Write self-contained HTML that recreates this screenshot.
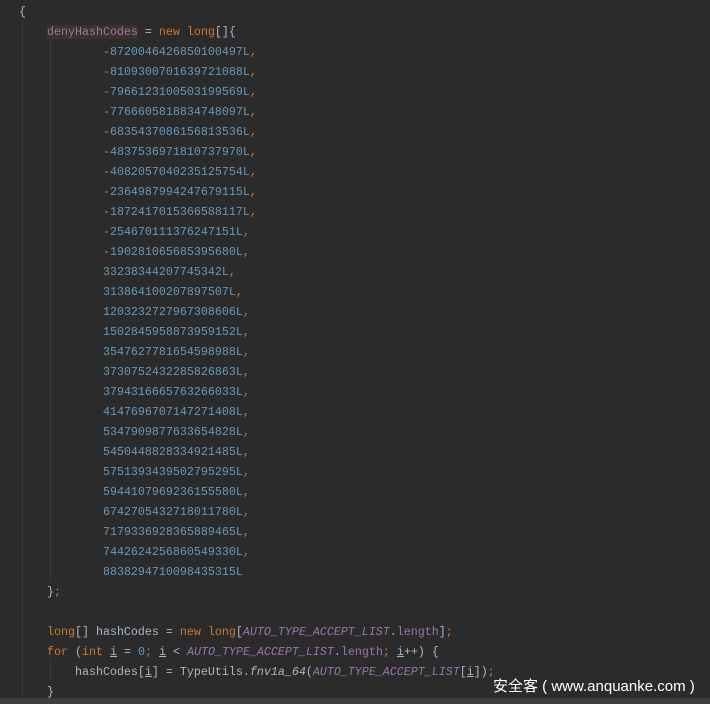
<!DOCTYPE html><html><head><style>
body{margin:0;background:#2b2b2b;width:710px;height:704px;overflow:hidden;position:relative}
pre{margin:0;position:absolute;left:19px;top:2px;font-family:"Liberation Mono",monospace;font-size:11.67px;line-height:20px;color:#a9b7c6;padding-top:0}
.n{color:#6897bb}.k{color:#cc7832}.f{color:#9876aa;font-style:italic}.v{color:#9876aa}
.u{text-decoration:underline}
.hl{background:#3b322e}
.g{position:absolute;width:1px;background:#3a3a3a}
.wm{position:absolute;left:493px;top:675px;color:#fff;font-family:"Liberation Sans","Noto Sans CJK SC",sans-serif;font-size:15px}
.bot{position:absolute;left:0;top:698px;width:710px;height:6px;background:#3c3f41}
</style></head><body>
<div class="g" style="left:22px;top:20px;height:678px"></div>
<div class="g" style="left:50px;top:40px;height:540px"></div>
<div class="g" style="left:50px;top:660px;height:20px"></div>
<pre>{
    <span class="v hl">denyHashCodes</span> = <span class="k">new long</span>[]{
            <span class="n">-8720046426850100497L</span><span class="k">,</span>
            <span class="n">-8109300701639721088L</span><span class="k">,</span>
            <span class="n">-7966123100503199569L</span><span class="k">,</span>
            <span class="n">-7766605818834748097L</span><span class="k">,</span>
            <span class="n">-6835437086156813536L</span><span class="k">,</span>
            <span class="n">-4837536971810737970L</span><span class="k">,</span>
            <span class="n">-4082057040235125754L</span><span class="k">,</span>
            <span class="n">-2364987994247679115L</span><span class="k">,</span>
            <span class="n">-1872417015366588117L</span><span class="k">,</span>
            <span class="n">-254670111376247151L</span><span class="k">,</span>
            <span class="n">-190281065685395680L</span><span class="k">,</span>
            <span class="n">33238344207745342L</span><span class="k">,</span>
            <span class="n">313864100207897507L</span><span class="k">,</span>
            <span class="n">1203232727967308606L</span><span class="k">,</span>
            <span class="n">1502845958873959152L</span><span class="k">,</span>
            <span class="n">3547627781654598988L</span><span class="k">,</span>
            <span class="n">3730752432285826863L</span><span class="k">,</span>
            <span class="n">3794316665763266033L</span><span class="k">,</span>
            <span class="n">4147696707147271408L</span><span class="k">,</span>
            <span class="n">5347909877633654828L</span><span class="k">,</span>
            <span class="n">5450448828334921485L</span><span class="k">,</span>
            <span class="n">5751393439502795295L</span><span class="k">,</span>
            <span class="n">5944107969236155580L</span><span class="k">,</span>
            <span class="n">6742705432718011780L</span><span class="k">,</span>
            <span class="n">7179336928365889465L</span><span class="k">,</span>
            <span class="n">7442624256860549330L</span><span class="k">,</span>
            <span class="n">8838294710098435315L</span>
    }<span class="k">;</span>

    <span class="k">long</span>[] hashCodes = <span class="k">new long</span>[<span class="f">AUTO_TYPE_ACCEPT_LIST</span>.<span class="v">length</span>]<span class="k">;</span>
    <span class="k">for</span> (<span class="k">int</span> <span class="u">i</span> = <span class="n">0</span><span class="k">;</span> <span class="u">i</span> &lt; <span class="f">AUTO_TYPE_ACCEPT_LIST</span>.<span class="v">length</span><span class="k">;</span> <span class="u">i</span>++) {
        hashCodes[<span class="u">i</span>] = TypeUtils.<i>fnv1a_64</i>(<span class="f">AUTO_TYPE_ACCEPT_LIST</span>[<span class="u">i</span>])<span class="k">;</span>
    }
</pre>
<div class="wm">安全客 ( www.anquanke.com )</div>
<div class="bot"></div>
</body></html>
